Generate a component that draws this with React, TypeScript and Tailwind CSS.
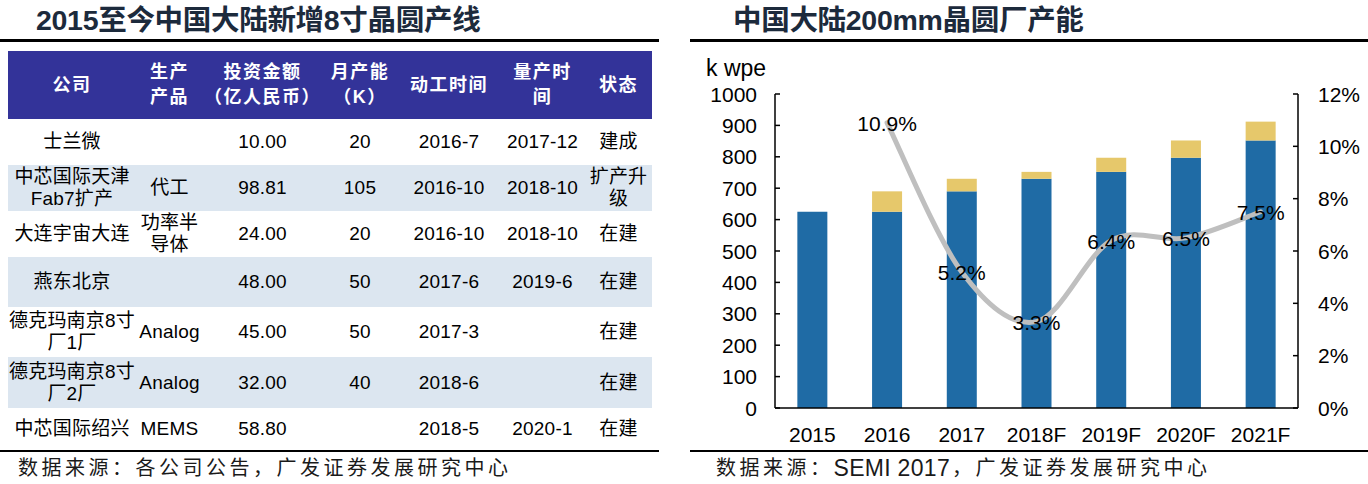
import React from "react";

const FONT = "font-['Liberation_Sans','Noto_Sans_CJK_SC',sans-serif]";

type Row = {
  h: string;
  shade: boolean;
  cells: React.ReactNode[];
};

const rows: Row[] = [
  { h: "h-[46px]", shade: false, cells: ["士兰微", "", "10.00", "20", "2016-7", "2017-12", "建成"] },
  {
    h: "h-[46px]",
    shade: true,
    cells: [
      <>中芯国际天津<br />Fab7扩产</>,
      "代工",
      "98.81",
      "105",
      "2016-10",
      "2018-10",
      <>扩产升<br />级</>,
    ],
  },
  {
    h: "h-[46px]",
    shade: false,
    cells: ["大连宇宙大连", <>功率半<br />导体</>, "24.00", "20", "2016-10", "2018-10", "在建"],
  },
  { h: "h-[50px]", shade: true, cells: ["燕东北京", "", "48.00", "50", "2017-6", "2019-6", "在建"] },
  {
    h: "h-[50px]",
    shade: false,
    cells: [<>德克玛南京8寸<br />厂1厂</>, "Analog", "45.00", "50", "2017-3", "", "在建"],
  },
  {
    h: "h-[51px]",
    shade: true,
    cells: [<>德克玛南京8寸<br />厂2厂</>, "Analog", "32.00", "40", "2018-6", "", "在建"],
  },
  { h: "h-[42px]", shade: false, cells: ["中芯国际绍兴", "MEMS", "58.80", "", "2018-5", "2020-1", "在建"] },
];

const COLS = "grid grid-cols-[128px_67px_119px_76px_102px_85px_67px]";

const headers: React.ReactNode[] = [
  "公司",
  <>生产<br />产品</>,
  <>投资金额<br />（亿人民币）</>,
  <>月产能<br />（K）</>,
  "动工时间",
  <>量产时<br />间</>,
  "状态",
];

function LeftPanel() {
  return (
    <div className="flex w-[660px] flex-col">
      <div className="flex h-[39px] items-center pl-[36px] pt-[1px]">
        <span className="text-[28.5px] font-bold leading-none tracking-[-0.3px] text-[#1c2a3c]">
          2015至今中国大陆新增8寸晶圆产线
        </span>
      </div>
      <div className="h-[3px] w-[659px] bg-black" />
      <div className="ml-[8px] mt-[9px] flex w-[644px] flex-col">
        <div className={`${COLS} h-[68px] bg-[#333399] text-white`}>
          {headers.map((h, i) => (
            <div
              key={i}
              className="flex items-center justify-center text-center text-[18px] font-bold leading-[25px] tracking-[1.5px]"
            >
              <span>{h}</span>
            </div>
          ))}
        </div>
        {rows.map((r, ri) => (
          <div key={ri} className={`${COLS} ${r.h} ${r.shade ? "bg-[#dce6f0]" : "bg-white"} text-black`}>
            {r.cells.map((c, ci) => (
              <div
                key={ci}
                className="flex items-center justify-center whitespace-nowrap text-center text-[19px] leading-[22px] tracking-[0.2px]"
              >
                <span>{c}</span>
              </div>
            ))}
          </div>
        ))}
      </div>
      <div className="h-[2px] w-[659px] bg-black" />
      <div className="flex h-[32px] items-center pl-[18px] text-[20px] leading-none tracking-[3.5px] text-[#1a1a1a]">
        数据来源：各公司公告，广发证券发展研究中心
      </div>
    </div>
  );
}

const years = ["2015", "2016", "2017", "2018F", "2019F", "2020F", "2021F"];
const blue = [625, 625, 690, 730, 752, 797, 852];
const total = [625, 690, 730, 752, 797, 852, 912];
const pct: (number | null)[] = [null, 10.9, 5.2, 3.3, 6.4, 6.5, 7.5];

const X0 = 775;
const X1 = 1298;
const Y0 = 408;
const YT = 94;
const step = (X1 - X0) / 7;
const cx = (i: number) => X0 + step * (i + 0.5);
const yL = (v: number) => Y0 - (v * (Y0 - YT)) / 1000;
const yR = (p: number) => Y0 - (p * (Y0 - YT)) / 12;

function smoothPath(pts: [number, number][]) {
  let d = `M${pts[0][0]},${pts[0][1]}`;
  for (let i = 0; i < pts.length - 1; i++) {
    const p0 = pts[i - 1] || pts[i];
    const p1 = pts[i];
    const p2 = pts[i + 1];
    const p3 = pts[i + 2] || p2;
    const c1x = p1[0] + (p2[0] - p0[0]) / 6;
    const c1y = p1[1] + (p2[1] - p0[1]) / 6;
    const c2x = p2[0] - (p3[0] - p1[0]) / 6;
    const c2y = p2[1] - (p3[1] - p1[1]) / 6;
    d += ` C${c1x},${c1y} ${c2x},${c2y} ${p2[0]},${p2[1]}`;
  }
  return d;
}

function Chart() {
  const leftTicks = Array.from({ length: 11 }, (_, i) => i * 100);
  const rightTicks = [0, 2, 4, 6, 8, 10, 12];
  const linePts: [number, number][] = [];
  pct.forEach((p, i) => {
    if (p !== null) linePts.push([cx(i), yR(p)]);
  });
  return (
    <svg width={678} height={408} viewBox="690 42 678 408" className={FONT}>
      <text x={706} y={68} fontSize={23} dominantBaseline="central" fill="#000">
        k wpe
      </text>
      {leftTicks.map((v) => (
        <g key={v}>
          <line x1={X0} x2={X0 + 5} y1={yL(v)} y2={yL(v)} stroke="#000" strokeWidth={1.5} />
          <text x={757} y={yL(v)} fontSize={21} textAnchor="end" dominantBaseline="central" fill="#000">
            {v}
          </text>
        </g>
      ))}
      {rightTicks.map((p) => (
        <g key={p}>
          <line x1={X1 - 5} x2={X1} y1={yR(p)} y2={yR(p)} stroke="#000" strokeWidth={1.5} />
          <text x={1318} y={yR(p)} fontSize={21} dominantBaseline="central" fill="#000">
            {p}%
          </text>
        </g>
      ))}
      {years.map((y, i) => (
        <g key={y}>
          <rect x={cx(i) - 15} y={yL(blue[i])} width={30} height={Y0 - yL(blue[i])} fill="#1f6ba5" />
          {total[i] > blue[i] && (
            <rect
              x={cx(i) - 15}
              y={yL(total[i])}
              width={30}
              height={yL(blue[i]) - yL(total[i])}
              fill="#e6c86b"
            />
          )}
          <text x={cx(i)} y={434} fontSize={21} textAnchor="middle" dominantBaseline="central" fill="#000">
            {y}
          </text>
        </g>
      ))}
      <line x1={X0} x2={X0} y1={YT} y2={Y0} stroke="#000" strokeWidth={1.5} />
      <line x1={X1} x2={X1} y1={YT} y2={Y0} stroke="#000" strokeWidth={1.5} />
      <line x1={X0} x2={X1} y1={Y0} y2={Y0} stroke="#000" strokeWidth={1.5} />
      <path d={smoothPath(linePts)} fill="none" stroke="#bfbfbf" strokeWidth={5} strokeLinecap="round" />
      {pct.map((p, i) =>
        p === null ? null : (
          <text
            key={i}
            x={cx(i)}
            y={yR(p) + 1}
            fontSize={21}
            textAnchor="middle"
            dominantBaseline="central"
            fill="#000"
          >
            {p.toFixed(1)}%
          </text>
        )
      )}
    </svg>
  );
}

function RightPanel() {
  return (
    <div className="flex w-[678px] flex-col">
      <div className="flex h-[39px] items-center pl-[43px] pt-[1px]">
        <span className="text-[28.5px] font-bold leading-none tracking-[-0.3px] text-[#1c2a3c]">
          中国大陆200mm晶圆厂产能
        </span>
      </div>
      <div className="h-[3px] w-full bg-black" />
      <Chart />
      <div className="h-[2px] w-full bg-black" />
      <div className="flex h-[32px] items-center pl-[26px] text-[20px] leading-none tracking-[3.5px] text-[#1a1a1a]">
        <span>数据来源：</span>
        <span className="text-[23px] tracking-[0.3px]">SEMI 2017</span>
        <span className="ml-[2px]">，广发证券发展研究中心</span>
      </div>
    </div>
  );
}

export default function App() {
  return (
    <div className={`flex h-[484px] w-[1368px] gap-[30px] overflow-hidden bg-white ${FONT}`}>
      <LeftPanel />
      <RightPanel />
    </div>
  );
}
